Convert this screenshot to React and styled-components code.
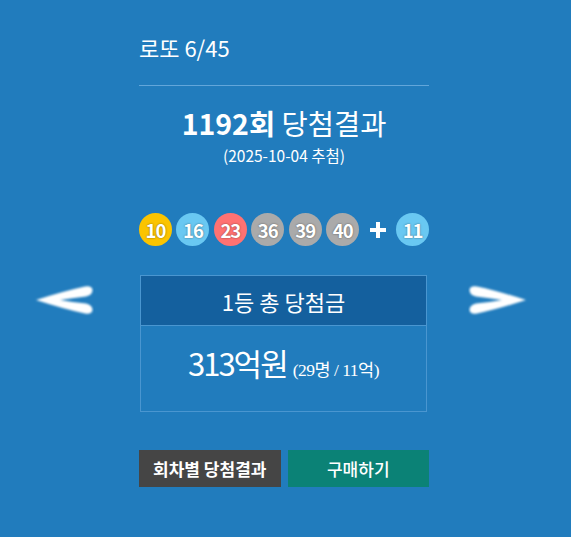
import React from "react";
import styled, { createGlobalStyle } from "styled-components";

const GlobalStyle = createGlobalStyle`
  html, body {
    margin: 0;
    padding: 0;
    background: #217cbd;
  }
  body {
    font-family: "Noto Sans CJK KR", "Noto Sans", sans-serif;
    color: #fff;
  }
`;

const Page = styled.div`
  min-height: 100vh;
  background: #217cbd;
  overflow: hidden;
`;

const Column = styled.div`
  width: 290px;
  margin: 0 auto;
  padding: 33px 3px 0 0;
  display: flex;
  flex-direction: column;
`;

const GameTitle = styled.h1`
  margin: 0;
  font-size: 22px;
  line-height: 28px;
  font-weight: 400;
`;

const Divider = styled.hr`
  margin: 24px 0 0;
  border: 0;
  height: 1px;
  background: #62a6da;
`;

const RoundTitle = styled.h2`
  margin: 19px 0 0;
  text-align: center;
  font-size: 28.5px;
  line-height: 36px;
  font-weight: 400;
  strong {
    font-weight: 700;
  }
`;

const DrawDate = styled.p`
  margin: 4px 0 0;
  text-align: center;
  font-size: 15.5px;
  line-height: 20px;
`;

const BallRow = styled.div`
  margin-top: 48px;
  display: flex;
  align-items: center;
  gap: 4.5px;
`;

const ballColors = {
  yellow: "#fbc400",
  blue: "#69c8f2",
  red: "#ff7272",
  gray: "#aaaaaa",
  green: "#b0d840",
};

const Ball = styled.span`
  width: 33px;
  height: 33px;
  border-radius: 50%;
  background: ${(p) => ballColors[p.$tone]};
  display: flex;
  align-items: center;
  justify-content: center;
  font-size: 18.5px;
  font-weight: 700;
  letter-spacing: -1px;
  color: #fff;
  text-shadow: 0 0 2px rgba(0, 0, 0, 0.5);
`;

const Plus = styled.span`
  width: 28px;
  display: flex;
  align-items: center;
  justify-content: center;
`;

const Prize = styled.section`
  position: relative;
  margin: 29px 2px 0 1px;
  border: 1px solid #4a96d0;
`;

const PrizeHead = styled.div`
  height: 49px;
  background: #14609e;
  border-bottom: 1px solid #4a96d0;
  display: flex;
  align-items: center;
  justify-content: center;
  font-size: 22px;
`;

const PrizeBody = styled.div`
  height: 85px;
  display: flex;
  align-items: baseline;
  justify-content: center;
  line-height: 74px;
`;

const Amount = styled.strong`
  font-size: 31px;
  font-weight: 400;
  letter-spacing: -2px;
`;

const AmountNote = styled.span`
  margin-left: 6px;
  font-family: "Liberation Serif", "Noto Sans CJK KR", serif;
  font-size: 17.5px;
  letter-spacing: -0.5px;
`;

const NavArrow = styled.button`
  position: absolute;
  top: 8px;
  ${(p) => (p.$side === "left" ? "left: -107px;" : "right: -102px;")}
  width: 60px;
  height: 32px;
  padding: 0;
  border: 0;
  background: none;
  cursor: pointer;
  display: flex;
  align-items: center;
  justify-content: center;
`;

const Actions = styled.div`
  margin-top: 38px;
  display: flex;
  gap: 7px;
`;

const ActionButton = styled.a`
  flex: 1;
  height: 37px;
  display: flex;
  align-items: center;
  justify-content: center;
  background: ${(p) => (p.$variant === "buy" ? "#0b8276" : "#454545")};
  color: #fff;
  font-size: 17px;
  font-weight: ${(p) => (p.$variant === "buy" ? 500 : 700)};
  text-decoration: none;
`;

function Chevron({ flip }) {
  const id = flip ? "soft-r" : "soft-l";
  return (
    <svg
      width="60"
      height="32"
      viewBox="0 0 60 32"
      style={flip ? { transform: "scaleX(-1)" } : undefined}
    >
      <defs>
        <filter id={id} x="-10%" y="-20%" width="120%" height="140%">
          <feGaussianBlur stdDeviation="0.8" />
        </filter>
      </defs>
      {/* wide chevron, arms thicken toward their open ends */}
      <path
        d="M2 16 Q30 7 51 2.5 Q58 1.5 58.5 6 Q58.5 11 52 12.5 Q38 14 26 16 Q38 18 52 19.5 Q58.5 21 58.5 26 Q58 30.5 51 29.5 Q30 25 2 16 Z"
        fill="#fff"
        filter={`url(#${id})`}
      />
    </svg>
  );
}

function PlusSign() {
  return (
    <svg width="18" height="18" viewBox="0 0 18 18">
      <path d="M9 1 V17 M1 9 H17" stroke="#fff" strokeWidth="4" />
    </svg>
  );
}

const balls = [
  { n: 10, tone: "yellow" },
  { n: 16, tone: "blue" },
  { n: 23, tone: "red" },
  { n: 36, tone: "gray" },
  { n: 39, tone: "gray" },
  { n: 40, tone: "gray" },
];

export default function App() {
  return (
    <Page>
      <GlobalStyle />
      <Column>
        <GameTitle>로또 6/45</GameTitle>
        <Divider />
        <RoundTitle>
          <strong>1192회</strong> 당첨결과
        </RoundTitle>
        <DrawDate>(2025-10-04 추첨)</DrawDate>

        <BallRow>
          {balls.map((b) => (
            <Ball key={b.n} $tone={b.tone}>
              {b.n}
            </Ball>
          ))}
          <Plus>
            <PlusSign />
          </Plus>
          <Ball $tone="blue">11</Ball>
        </BallRow>

        <Prize>
          <NavArrow $side="left" aria-label="이전 회차">
            <Chevron />
          </NavArrow>
          <PrizeHead>1등 총 당첨금</PrizeHead>
          <PrizeBody>
            <Amount>313억원</Amount>
            <AmountNote>(29명 / 11억)</AmountNote>
          </PrizeBody>
          <NavArrow $side="right" aria-label="다음 회차">
            <Chevron flip />
          </NavArrow>
        </Prize>

        <Actions>
          <ActionButton href="#" $variant="history">
            회차별 당첨결과
          </ActionButton>
          <ActionButton href="#" $variant="buy">
            구매하기
          </ActionButton>
        </Actions>
      </Column>
    </Page>
  );
}
